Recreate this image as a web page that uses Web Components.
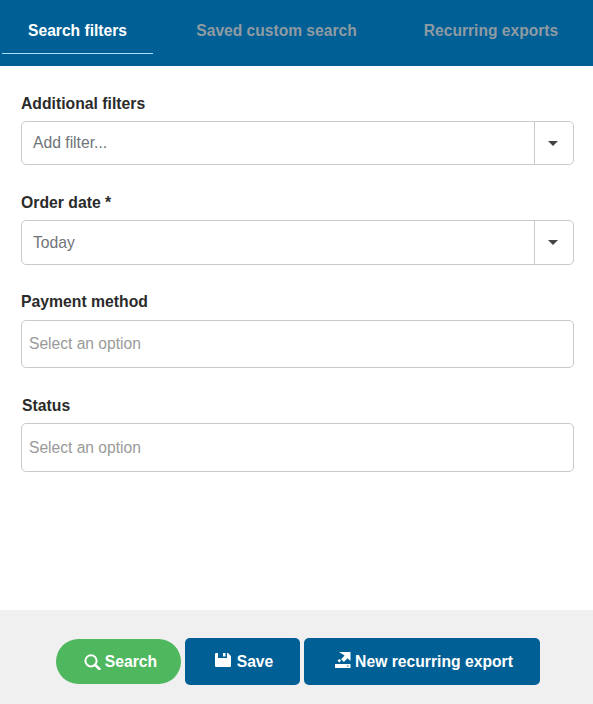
<!DOCTYPE html>
<html>
<head>
<meta charset="utf-8">
<style>
  html, body { margin: 0; padding: 0; background: #fff; }
  body { font-family: "Liberation Sans", Arial, sans-serif; }
</style>
</head>
<body>
<filter-panel>
  <tab-bar slot="tabs">
    <tab-item active style="width:151px">Search filters</tab-item>
    <tab-item style="width:247px">Saved custom search</tab-item>
    <tab-item style="width:182px">Recurring exports</tab-item>
  </tab-bar>
  <filter-field label="Additional filters" style="margin-bottom:28px;--label-gap:7px">
    <combo-box placeholder="Add filter..." height="44"></combo-box>
  </filter-field>
  <filter-field label="Order date *" style="margin-bottom:27px;--label-gap:7px">
    <combo-box value="Today" height="45"></combo-box>
  </filter-field>
  <filter-field label="Payment method" style="margin-bottom:27px">
    <select-box height="48"></select-box>
  </filter-field>
  <filter-field label="Status" nudge="1">
    <select-box height="49"></select-box>
  </filter-field>
  <action-bar slot="footer">
    <action-button kind="search" label="Search" style="width:125px;margin-right:4px"></action-button>
    <action-button kind="save" label="Save" style="width:115px;margin-right:4px"></action-button>
    <action-button kind="export" label="New recurring export" style="width:236px"></action-button>
  </action-bar>
</filter-panel>

<script>
class FilterPanel extends HTMLElement {
  connectedCallback() {
    this.attachShadow({ mode: 'open' });
    this.shadowRoot.innerHTML = `
      <style>
        :host { display: flex; flex-direction: column; height: 704px; width: 593px; overflow: hidden; }
        .fields { flex: 1; padding: 28px 19px 0 21px; }
      </style>
      <slot name="tabs"></slot>
      <div class="fields"><slot></slot></div>
      <slot name="footer"></slot>
    `;
  }
}

class TabBar extends HTMLElement {
  connectedCallback() {
    this.attachShadow({ mode: 'open' });
    this.shadowRoot.innerHTML = `
      <style>
        :host { display: flex; height: 66px; background: #005f95; padding-left: 2px; box-sizing: border-box; }
      </style>
      <slot></slot>
    `;
  }
}

class TabItem extends HTMLElement {
  connectedCallback() {
    this.attachShadow({ mode: 'open' });
    this.shadowRoot.innerHTML = `
      <style>
        :host {
          display: block;
          height: 54px;
          box-sizing: border-box;
          padding-top: 22px;
          text-align: center;
          font: bold 15.6px/18px "Liberation Sans", Arial, sans-serif;
          color: #8f9ba3;
          white-space: nowrap;
        }
        :host([active]) { color: #fff; border-bottom: 1px solid #a8dff5; }
      </style>
      <slot></slot>
    `;
  }
}

class FilterField extends HTMLElement {
  connectedCallback() {
    this.attachShadow({ mode: 'open' });
    this.shadowRoot.innerHTML = `
      <style>
        :host { display: block; }
        label {
          display: block;
          font: bold 15.75px/20px "Liberation Sans", Arial, sans-serif;
          color: #2b2b2b;
          margin-bottom: var(--label-gap, 8px);
          height: 20px;
        }
        :host([nudge]) label { padding-left: 1px; height: 19px; padding-top: 1px; }
      </style>
      <label>${this.getAttribute('label')}</label>
      <slot></slot>
    `;
  }
}

class ComboBox extends HTMLElement {
  connectedCallback() {
    this.attachShadow({ mode: 'open' });
    const value = this.getAttribute('value');
    const text = value || this.getAttribute('placeholder');
    this.shadowRoot.innerHTML = `
      <style>
        :host { display: block; }
        .box {
          display: flex;
          height: ${this.getAttribute('height')}px;
          box-sizing: border-box;
          border: 1px solid #cacaca;
          border-radius: 5px;
          background: #fff;
        }
        .text {
          flex: 1;
          padding-left: 11px;
          align-self: center;
          font: 15.7px/20px "Liberation Sans", Arial, sans-serif;
          color: #6f7478;
        }
        .arrow {
          width: 39px;
          border-left: 1px solid #cacaca;
          display: flex;
          align-items: center;
          justify-content: center;
          padding-right: 3px;
          box-sizing: border-box;
        }
        svg { display: block; }
      </style>
      <div class="box">
        <div class="text">${text}</div>
        <div class="arrow"><svg width="10" height="5" viewBox="0 0 10 5"><path d="M0 0h10L5 5z" fill="#444"/></svg></div>
      </div>
    `;
  }
}

class SelectBox extends HTMLElement {
  connectedCallback() {
    this.attachShadow({ mode: 'open' });
    this.shadowRoot.innerHTML = `
      <style>
        :host { display: block; }
        .box {
          display: flex;
          align-items: center;
          height: ${this.getAttribute('height')}px;
          box-sizing: border-box;
          border: 1px solid #cacaca;
          border-radius: 5px;
          padding-left: 7px;
          font: 15.6px/20px "Liberation Sans", Arial, sans-serif;
          color: #9a9a9a;
        }
      </style>
      <div class="box">Select an option</div>
    `;
  }
}

class ActionBar extends HTMLElement {
  connectedCallback() {
    this.attachShadow({ mode: 'open' });
    this.shadowRoot.innerHTML = `
      <style>
        :host {
          display: flex;
          align-items: center;
          height: 94px;
          box-sizing: border-box;
          background: #f0f0f0;
          padding: 27px 0 18px 56px;
        }
      </style>
      <slot></slot>
    `;
  }
}

const ICONS = {
  search: '<svg width="17" height="16" viewBox="0 0 17 16"><circle cx="7" cy="6.800" r="5.600" fill="none" stroke="#fff" stroke-width="2"/><path d="M11 10.800 15.400 15" stroke="#fff" stroke-width="2.600" stroke-linecap="round"/></svg>',
  save: '<svg width="16" height="14" viewBox="0 0 16 14"><path fill="#fff" fill-rule="evenodd" d="M0 1a1 1 0 0 1 1-1h2v5h9V0h1l3 3v10a1 1 0 0 1-1 1H1a1 1 0 0 1-1-1z"/><path fill="#fff" d="M8 0h2.500v3.500H8z"/></svg>',
  export: '<svg width="16" height="18" viewBox="0 0 16 18"><path fill="#fff" fill-rule="evenodd" d="M0 13h15.500v4H0zM12 14.500v1h1.500v-1z"/><path fill="#fff" d="M4 1h11.500v9l-3-2.800-3.600 3.800-2.800-2.800 3.500-3.600z"/><path fill="#fff" d="M2.500 9.500 4.500 8l1.500 1.500-1.500 2z"/></svg>'
};

class ActionButton extends HTMLElement {
  connectedCallback() {
    this.attachShadow({ mode: 'open' });
    const kind = this.getAttribute('kind');
    this.shadowRoot.innerHTML = `
      <style>
        :host { display: block; flex: none; }
        button {
          display: flex;
          align-items: center;
          justify-content: center;
          gap: 4px;
          width: 100%;
          height: 47px;
          padding: 0 0 0 4px;
          border: none;
          border-radius: 5px;
          background: #005f95;
          color: #fff;
          font: bold 15.7px/20px "Liberation Sans", Arial, sans-serif;
        }
        button.search { height: 45px; border-radius: 23px; background: #4fb75e; }
        button.save { gap: 6px; padding-left: 3px; }
        svg { display: block; }
        button.save svg { margin-top: -4px; }
        button.export svg { margin-top: -3px; }
      </style>
      <button class="${kind}">${ICONS[kind]}<span>${this.getAttribute('label')}</span></button>
    `;
  }
}

customElements.define('filter-panel', FilterPanel);
customElements.define('tab-bar', TabBar);
customElements.define('tab-item', TabItem);
customElements.define('filter-field', FilterField);
customElements.define('combo-box', ComboBox);
customElements.define('select-box', SelectBox);
customElements.define('action-bar', ActionBar);
customElements.define('action-button', ActionButton);
</script>
</body>
</html>
